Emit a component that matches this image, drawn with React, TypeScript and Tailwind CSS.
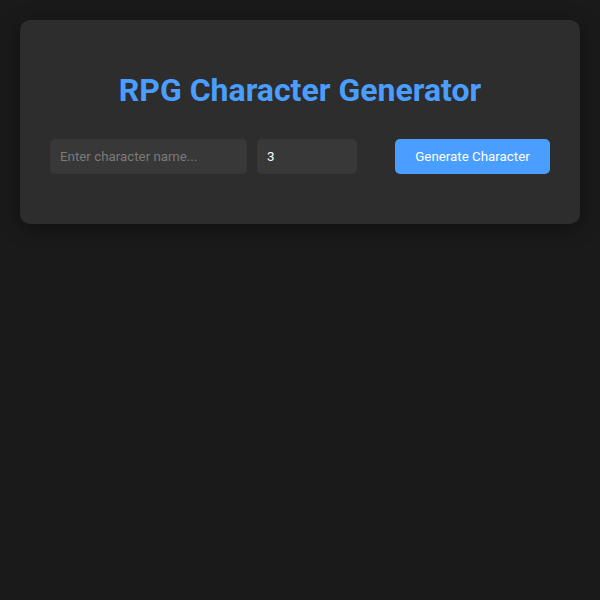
import React from 'react';

const App: React.FC = () => {
  const [name, setName] = React.useState('');
  const [level, setLevel] = React.useState('3');

  return (
    <div className="min-h-screen bg-[#1a1a1a] p-5 font-['Roboto',sans-serif] text-white">
      <div className="rounded-[10px] bg-[#2d2d2d] px-[30px] pt-[30px] pb-[50px] shadow-[0_4px_20px_rgba(0,0,0,0.4)]">
        <h1 className="mt-[21px] mb-[30px] text-center text-[32px] leading-[38px] font-bold text-[#4a9eff]">
          RPG Character Generator
        </h1>

        <div className="flex items-center">
          <input
            type="text"
            value={name}
            onChange={(e) => setName(e.target.value)}
            placeholder="Enter character name..."
            className="h-[35px] w-[197px] rounded-[5px] bg-[#383838] px-[10px] text-[13.33px] text-white placeholder-[#7a7a7a] outline-none"
          />
          <input
            type="number"
            value={level}
            onChange={(e) => setLevel(e.target.value)}
            className="ml-[10px] h-[35px] w-[100px] appearance-none rounded-[5px] bg-[#383838] px-[10px] text-[13.33px] text-white outline-none [&::-webkit-inner-spin-button]:appearance-none"
          />
          <button className="ml-auto h-[35px] w-[155px] rounded-[5px] bg-[#4a9eff] text-[13.33px] text-white">
            Generate Character
          </button>
        </div>
      </div>
    </div>
  );
};

export default App;
